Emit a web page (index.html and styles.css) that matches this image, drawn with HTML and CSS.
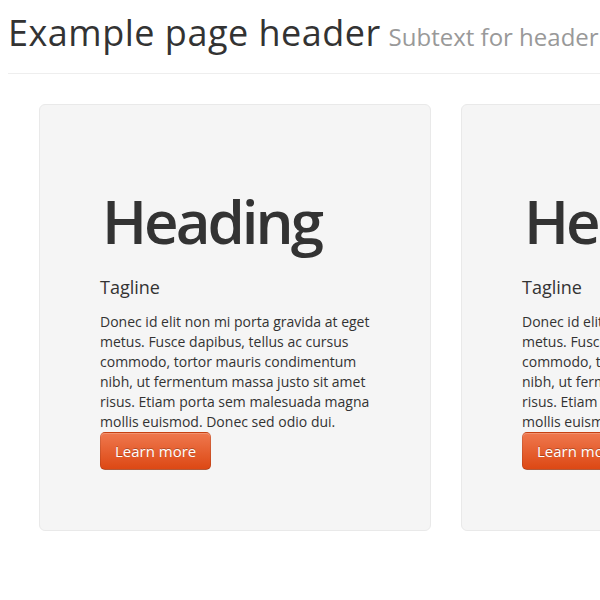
FILE: index.html
```html
<!DOCTYPE html>
<html>
<head>
<meta charset="utf-8">
<link rel="stylesheet" href="styles.css">
</head>
<body>
<div class="page">
  <header class="page-header">
    <h1>Example page header <small>Subtext for header</small></h1>
  </header>
  <div class="row">
    <section class="hero">
      <h2>Heading</h2>
      <p class="tagline">Tagline</p>
      <p class="body">Donec id elit non mi porta gravida at eget metus. Fusce dapibus, tellus ac cursus commodo, tortor mauris condimentum nibh, ut fermentum massa justo sit amet risus. Etiam porta sem malesuada magna mollis euismod. Donec sed odio dui.</p>
      <a class="btn" href="#">Learn more</a>
    </section>
    <section class="hero">
      <h2>Heading</h2>
      <p class="tagline">Tagline</p>
      <p class="body">Donec id elit non mi porta gravida at eget metus. Fusce dapibus, tellus ac cursus commodo, tortor mauris condimentum nibh, ut fermentum massa justo sit amet risus. Etiam porta sem malesuada magna mollis euismod. Donec sed odio dui.</p>
      <a class="btn" href="#">Learn more</a>
    </section>
  </div>
</div>
</body>
</html>
```
FILE: styles.css
```css
html, body {
  margin: 0;
  padding: 0;
  overflow: hidden;
  background: #fff;
}
body {
  font-family: "Open Sans", "Noto Sans", sans-serif;
  color: #333;
}
.page {
  width: 1200px;
  padding: 0 8px;
}
.page-header {
  padding-top: 13px;
  padding-bottom: 16px;
  border-bottom: 1px solid #eee;
}
.page-header h1 {
  margin: 0;
  font-size: 36px;
  line-height: 40px;
  font-weight: 400;
  letter-spacing: 0.5px;
  color: #333;
  white-space: nowrap;
}
.page-header small {
  margin-left: -2px;
  font-size: 24px;
  font-weight: 400;
  letter-spacing: 0;
  color: #999;
}
.row {
  display: flex;
  gap: 30px;
  padding-left: 31px;
  margin-top: 30px;
}
.hero {
  flex: 0 0 392px;
  box-sizing: border-box;
  padding: 60px;
  background: #f5f5f5;
  border: 1px solid #e9e9e9;
  border-radius: 6px;
  display: flex;
  flex-direction: column;
  align-items: flex-start;
}
.hero h2 {
  margin: 26px 0 0 2px;
  font-size: 60px;
  line-height: 60px;
  font-weight: 600;
  letter-spacing: -3px;
  color: #333;
}
.tagline {
  margin: 23px 0 0;
  font-size: 18px;
  line-height: 27px;
  font-weight: 400;
}
.body {
  margin: 11px 0 0;
  font-size: 14px;
  line-height: 20px;
}
.btn {
  display: inline-block;
  padding: 9px 14px;
  font-size: 15px;
  line-height: 18px;
  color: #fff;
  text-decoration: none;
  text-shadow: 0 -1px 0 rgba(0,0,0,0.25);
  background: linear-gradient(#ef784e, #dd4814);
  border: 1px solid #c8410f;
  border-color: rgba(0,0,0,0.1) rgba(0,0,0,0.1) rgba(0,0,0,0.25);
  border-radius: 5px;
  box-shadow: inset 0 1px 0 rgba(255,255,255,0.2);
}
```
